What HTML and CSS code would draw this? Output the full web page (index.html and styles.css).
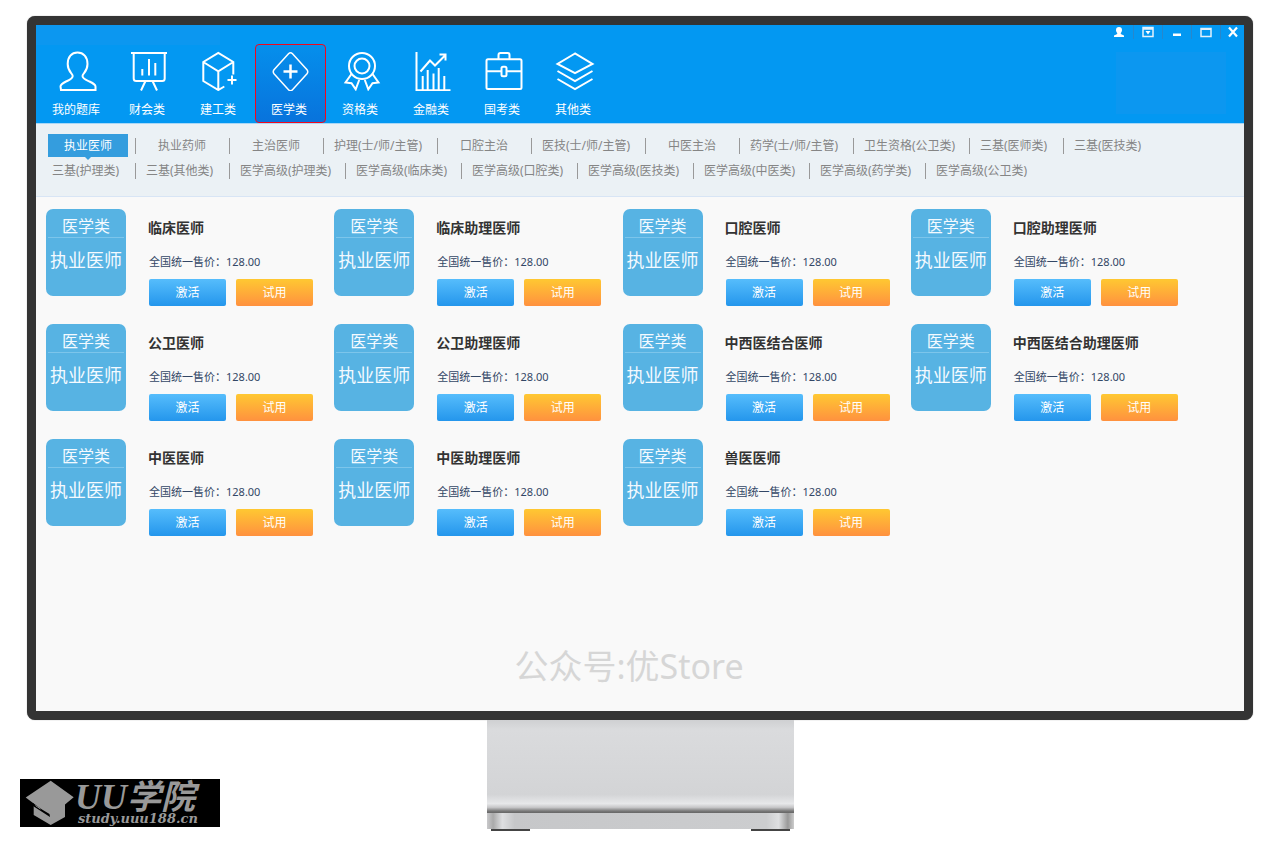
FILE: index.html
```html
<!DOCTYPE html>
<html lang="zh-CN">
<head>
<meta charset="utf-8">
<title>医学类题库</title>
<link rel="stylesheet" href="styles.css">
</head>
<body>
<div class="monitor">
  <div class="screen">
    <header class="header">
      <div class="winbar">
        <button class="win" type="button" aria-label="用户"><svg width="12" height="12" viewBox="0 0 12 12"><path d="M6 1c2 0 3 1 3 3 0 1.500-.7 2.300-1.200 3v1L11 9.500V11H1V9.500L4.200 8V7C3.700 6.300 3 5.500 3 4c0-2 1-3 3-3z" fill="#fff"/></svg></button>
        <button class="win" type="button" aria-label="菜单"><svg width="12" height="12" viewBox="0 0 12 12"><path d="M1 1.500h10v9H1zM1 3h10" fill="none" stroke="#e4f1fb" stroke-width="1.500"/><path d="M3.500 5h5L6 8.500z" fill="#fff"/></svg></button>
        <button class="win" type="button" aria-label="最小化"><svg width="12" height="12" viewBox="0 0 12 12"><path d="M2 7.500h8v2.500H2z" fill="#fff"/></svg></button>
        <button class="win" type="button" aria-label="最大化"><svg width="12" height="12" viewBox="0 0 12 12"><path d="M1 2.500h10v8H1z" fill="none" stroke="#e4f1fb" stroke-width="1.500"/><path d="M1 2h10v2H1z" fill="#e4f1fb"/></svg></button>
        <button class="win win-last" type="button" aria-label="关闭"><svg width="12" height="12" viewBox="0 0 12 12"><path d="M2 1.500l8 9M10 1.500l-8 9" stroke="#fff" stroke-width="2.200"/></svg></button>
      </div>
      <nav class="mainnav">
        <a class="main" href="#"><svg class="icon" viewBox="0 0 71 40"><path d="M19 39h34.500v-3.500c0-2-2-3-6-5-4-1.700-7-2.700-7-5.500s5-4 5-12c0-7-4-11.500-10-11.500S25.700 6 25.700 13c0 8 5 9.200 5 12s-3 3.800-6.700 5.500c-4 2-5.500 3-5.500 5z"/></svg><span class="main-label">我的题库</span></a>
        <a class="main" href="#"><svg class="icon" viewBox="0 0 71 40"><path d="M18 2h36M20.700 2v25.500q0 2.500 2.500 2.500h26q2.500 0 2.500-2.500V2M29.300 18v6.500M36 8v16.500M42.300 12v12.500M32.500 30l-4.500 9.500M39.500 30l4.500 9.500"/></svg><span class="main-label">财会类</span></a>
        <a class="main" href="#"><svg class="icon" viewBox="0 0 71 40"><path d="M49.300 23.500V11L34.300 2l-15 9v19l15 9 6-3.500M19.300 11l15 9.300 15-9.300M34.300 20.300V39M48 24.500v9M43.500 29h9"/></svg><span class="main-label">建工类</span></a>
        <a class="main main-active" href="#"><svg class="icon" viewBox="0 0 69 40"><path class="thin" d="M32.500 2.700q2-2 4 0l14.500 16q1.500 2 0 4l-14.500 16q-2 2-4 0l-14.500-16q-1.500-2 0-4z"/><path class="thick" d="M34.500 13.500v14M27.500 20.500h14"/></svg><span class="main-label">医学类</span></a>
        <a class="main" href="#"><svg class="icon" viewBox="0 0 71 40"><circle cx="36" cy="15" r="13"/><circle cx="36" cy="15" r="7.500"/><path d="M25.500 23L19.500 31.500l6 .8 4.200 6 3.500-9.300M46.500 23l6 8.500-6 .8-4.200 6-3.500-9.300"/></svg><span class="main-label">资格类</span></a>
        <a class="main" href="#"><svg class="icon" viewBox="0 0 71 40"><path d="M19.500 1v38.300h34M23.500 20.500L33 9.500l5 5L48 4.500M42.500 3.500h6v6M25.700 25v14M30.700 19v20M36.500 22.500v16.500M41.700 17v22M47.300 25v14"/></svg><span class="main-label">金融类</span></a>
        <a class="main" href="#"><svg class="icon" viewBox="0 0 71 40"><rect x="18.500" y="8.300" width="35" height="29.700" rx="1.500"/><path d="M30.500 8.300V4q0-2 2-2h7q2 0 2 2v4.300M18.500 20.300H33M39 20.300h14.500"/><rect x="33.500" y="15.700" width="5" height="9.500" rx="1.500"/></svg><span class="main-label">国考类</span></a>
        <a class="main" href="#"><svg class="icon" viewBox="0 0 71 40"><path d="M36 2.500L18.500 13 36 22.200 53.500 13zM18.500 20L36 30.200 53.500 20M18.500 28L36 38l17.500-10"/></svg><span class="main-label">其他类</span></a>
      </nav>
    </header>

    <nav class="subnav">
      <div class="subrow">
        <a class="sub sub-active" href="#">执业医师</a>
        <a class="sub" href="#">执业药师</a>
        <a class="sub" href="#">主治医师</a>
        <a class="sub sub-wide" href="#">护理(士/师/主管)</a>
        <a class="sub" href="#">口腔主治</a>
        <a class="sub sub-wide" href="#">医技(士/师/主管)</a>
        <a class="sub" href="#">中医主治</a>
        <a class="sub sub-wide" href="#">药学(士/师/主管)</a>
        <a class="sub sub-wider" href="#">卫生资格(公卫类)</a>
        <a class="sub sub-start" href="#">三基(医师类)</a>
        <a class="sub sub-start" href="#">三基(医技类)</a>
      </div>
      <div class="subrow">
        <a class="sub sub-start" href="#">三基(护理类)</a>
        <a class="sub sub-start" href="#">三基(其他类)</a>
        <a class="sub sub-wider" href="#">医学高级(护理类)</a>
        <a class="sub sub-wider" href="#">医学高级(临床类)</a>
        <a class="sub sub-wider" href="#">医学高级(口腔类)</a>
        <a class="sub sub-wider" href="#">医学高级(医技类)</a>
        <a class="sub sub-wider" href="#">医学高级(中医类)</a>
        <a class="sub sub-wider" href="#">医学高级(药学类)</a>
        <a class="sub sub-wider" href="#">医学高级(公卫类)</a>
      </div>
    </nav>

    <main class="content">
      <div class="grid">
        <article class="card"><div class="tile"><span class="tile-top">医学类</span><span class="tile-name">执业医师</span></div><div class="info"><h2 class="title">临床医师</h2><p class="price">全国统一售价：128.00</p><div class="actions"><button class="btn btn-blue" type="button">激活</button><button class="btn btn-orange" type="button">试用</button></div></div></article>
        <article class="card"><div class="tile"><span class="tile-top">医学类</span><span class="tile-name">执业医师</span></div><div class="info"><h2 class="title">临床助理医师</h2><p class="price">全国统一售价：128.00</p><div class="actions"><button class="btn btn-blue" type="button">激活</button><button class="btn btn-orange" type="button">试用</button></div></div></article>
        <article class="card"><div class="tile"><span class="tile-top">医学类</span><span class="tile-name">执业医师</span></div><div class="info"><h2 class="title">口腔医师</h2><p class="price">全国统一售价：128.00</p><div class="actions"><button class="btn btn-blue" type="button">激活</button><button class="btn btn-orange" type="button">试用</button></div></div></article>
        <article class="card"><div class="tile"><span class="tile-top">医学类</span><span class="tile-name">执业医师</span></div><div class="info"><h2 class="title">口腔助理医师</h2><p class="price">全国统一售价：128.00</p><div class="actions"><button class="btn btn-blue" type="button">激活</button><button class="btn btn-orange" type="button">试用</button></div></div></article>
        <article class="card"><div class="tile"><span class="tile-top">医学类</span><span class="tile-name">执业医师</span></div><div class="info"><h2 class="title">公卫医师</h2><p class="price">全国统一售价：128.00</p><div class="actions"><button class="btn btn-blue" type="button">激活</button><button class="btn btn-orange" type="button">试用</button></div></div></article>
        <article class="card"><div class="tile"><span class="tile-top">医学类</span><span class="tile-name">执业医师</span></div><div class="info"><h2 class="title">公卫助理医师</h2><p class="price">全国统一售价：128.00</p><div class="actions"><button class="btn btn-blue" type="button">激活</button><button class="btn btn-orange" type="button">试用</button></div></div></article>
        <article class="card"><div class="tile"><span class="tile-top">医学类</span><span class="tile-name">执业医师</span></div><div class="info"><h2 class="title">中西医结合医师</h2><p class="price">全国统一售价：128.00</p><div class="actions"><button class="btn btn-blue" type="button">激活</button><button class="btn btn-orange" type="button">试用</button></div></div></article>
        <article class="card"><div class="tile"><span class="tile-top">医学类</span><span class="tile-name">执业医师</span></div><div class="info"><h2 class="title">中西医结合助理医师</h2><p class="price">全国统一售价：128.00</p><div class="actions"><button class="btn btn-blue" type="button">激活</button><button class="btn btn-orange" type="button">试用</button></div></div></article>
        <article class="card"><div class="tile"><span class="tile-top">医学类</span><span class="tile-name">执业医师</span></div><div class="info"><h2 class="title">中医医师</h2><p class="price">全国统一售价：128.00</p><div class="actions"><button class="btn btn-blue" type="button">激活</button><button class="btn btn-orange" type="button">试用</button></div></div></article>
        <article class="card"><div class="tile"><span class="tile-top">医学类</span><span class="tile-name">执业医师</span></div><div class="info"><h2 class="title">中医助理医师</h2><p class="price">全国统一售价：128.00</p><div class="actions"><button class="btn btn-blue" type="button">激活</button><button class="btn btn-orange" type="button">试用</button></div></div></article>
        <article class="card"><div class="tile"><span class="tile-top">医学类</span><span class="tile-name">执业医师</span></div><div class="info"><h2 class="title">兽医医师</h2><p class="price">全国统一售价：128.00</p><div class="actions"><button class="btn btn-blue" type="button">激活</button><button class="btn btn-orange" type="button">试用</button></div></div></article>
      </div>
      <p class="watermark">公众号:优Store</p>
    </main>
  </div>
</div>

<footer class="desk">
  <div class="logo">
    <svg class="cap" viewBox="0 0 50 46"><path d="M25.700.7l23 16.600-8.700 7.200V37L25.700 45 8.700 35V23.500l-8-6z" fill="#999"/><path d="M8 23l9 6.500 7.500 4.500.5 3L8 26z" fill="#000"/><path d="M10.500 25.500l5 3.500" stroke="#999"/></svg>
    <div class="logo-text">
      <span class="logo-name">UU<span class="logo-han">学院</span></span>
      <span class="logo-url">study.uuu188.cn</span>
    </div>
  </div>
  <div class="stand">
    <div class="neck"></div>
    <div class="base"></div>
    <div class="feet"><span class="foot"></span><span class="foot"></span></div>
  </div>
</footer>
</body>
</html>
```

FILE: styles.css
```css
* { box-sizing: border-box; }

body {
  margin: 0;
  padding-top: 16px;
  background: #fff;
  font-family: "Noto Sans", "Noto Sans CJK SC", sans-serif;
  font-size: 12px;
}

a { text-decoration: none; color: inherit; }
h2, p { margin: 0; }
button { border: 0; padding: 0; font: inherit; color: inherit; background: none; cursor: pointer; }

.monitor {
  margin: 0 27px;
  border: 9px solid #343434;
  border-radius: 8px;
  background: #343434;
  box-shadow: 0 0 1px #777;
}

.screen { display: flex; flex-direction: column; min-height: 686px; background: #f9f9f9; }

.header {
  border-bottom: 1px solid #a9d8f7;
  background:
    linear-gradient(#0c97f0, #0c97f0) right 18px top 27px / 110px 62px no-repeat,
    linear-gradient(#0c97f0, #0c97f0) left top / 184px 20px no-repeat,
    #0398f2;
  color: #fff;
}

.winbar { display: flex; justify-content: flex-end; height: 19px; }
.win {
  display: flex;
  align-items: center;
  justify-content: center;
  width: 29px;
  height: 14px;
  border-left: 1px solid #2787cc;
}
.win:first-child { border-left: 0; }
.win-last { width: 24px; }

.mainnav { display: flex; padding-left: 6px; }
.main {
  display: flex;
  flex-direction: column;
  align-items: center;
  width: 71px;
  height: 79px;
  padding-top: 7px;
}
.main-active {
  padding-top: 6px;
  border: 1px solid #f3061b;
  border-radius: 4px;
  background: linear-gradient(#058fec, #0873dc);
}
.icon { width: 100%; height: 40px; fill: none; stroke: #fff; stroke-width: 2; }
.thin { stroke-width: 1.5; }
.thick { stroke-width: 2.5; }
.main-label { padding-right: 3px; margin-top: 9px; line-height: 20px; }

.subnav {
  padding: 10px 12px 12px;
  border-bottom: 1px solid #d8e5f5;
  background: #ebf1f5;
  color: #858585;
}
.subrow { display: flex; height: 25px; }
.sub {
  display: flex;
  justify-content: center;
  flex: none;
  position: relative;
  width: 80px;
  height: 23px;
  margin-right: 14px;
  line-height: 23px;
  white-space: nowrap;
}
.sub::after {
  content: "";
  position: absolute;
  top: 4px;
  right: -8px;
  width: 1px;
  height: 16px;
  background: #999;
}
.sub:last-child::after { display: none; }
.sub-start { justify-content: flex-start; padding-left: 4px; }
.sub-wide { width: 100px; justify-content: flex-start; padding-left: 4px; }
.sub-wider { width: 102px; justify-content: flex-start; padding-left: 4px; }
.sub-active { background: #349dde; color: #fff; }
.sub-active::before {
  content: "";
  position: absolute;
  top: 23px;
  left: 37px;
  border: 3px solid transparent;
  border-top-color: #349dde;
}

.content {
  display: flex;
  flex: 1;
  flex-direction: column;
  justify-content: space-between;
  padding: 12px 45px 20px 10px;
}
.grid { display: grid; grid-template-columns: repeat(4, 1fr); row-gap: 17px; }
.card { display: flex; gap: 22px; height: 98px; }
.tile {
  display: flex;
  flex-direction: column;
  align-items: center;
  width: 80px;
  height: 87px;
  padding: 0 2px;
  border-radius: 7px;
  background: #57b3e3;
  color: #f4faff;
}
.tile-top {
  align-self: stretch;
  height: 29px;
  border-bottom: 1px solid #7cc5eb;
  font-size: 16px;
  line-height: 34px;
  text-align: center;
}
.tile-name { font-size: 18px; line-height: 45px; }
.info { display: flex; flex-direction: column; }
.title { padding-top: 8px; font-size: 14px; line-height: 22px; color: #333; white-space: nowrap; }
.price { padding: 13px 0 7px 1px; font-size: 11px; line-height: 20px; color: #334766; }
.actions { display: flex; gap: 10px; padding-left: 1px; }
.btn { width: 77px; height: 27px; border-radius: 2px; line-height: 26px; color: #fff; }
.btn-blue { background: linear-gradient(#56bdfc, #2496ec); }
.btn-orange { background: linear-gradient(#ffc832, #ff913f); }

.watermark { padding-left: 13px; font-size: 34px; line-height: 50px; text-align: center; color: #d6d6d6; }

.desk { display: grid; grid-template-columns: 1fr auto 1fr; align-items: end; }
.logo {
  display: flex;
  align-items: flex-start;
  width: 200px;
  height: 48px;
  margin: 0 0 4px 20px;
  padding: 1px 0 0 5px;
  background: #000;
  color: #999;
  font-style: italic;
  font-weight: bold;
}
.cap { width: 50px; height: 46px; }
.logo-text { display: flex; flex-direction: column; white-space: nowrap; }
.logo-name { height: 32px; font-family: "Liberation Serif", serif; font-size: 36px; line-height: 30px; }
.logo-han { font-family: "Noto Sans CJK SC", sans-serif; font-size: 34px; }
.logo-url { padding-left: 3px; font-family: "DejaVu Serif", serif; font-size: 13px; line-height: 13px; }

.stand { width: 307px; }
.neck {
  height: 93px;
  background: linear-gradient(#cfd0d2, #dadbdd 10%, #d3d4d6 80%, #e7e8ea 90%, #c6c6c8 94%, #777 98%, #666);
}
.base {
  height: 16px;
  background: linear-gradient(90deg, #c9c9cb, #aaa 2%, #dedfe1 5%, #c6c7c9 9%, #cccdcf 91%, #dedfe1 95%, #999 98%, #ccc);
}
.feet { display: flex; justify-content: space-between; padding: 0 4px; }
.foot { width: 39px; height: 2px; background: #444; }
```
